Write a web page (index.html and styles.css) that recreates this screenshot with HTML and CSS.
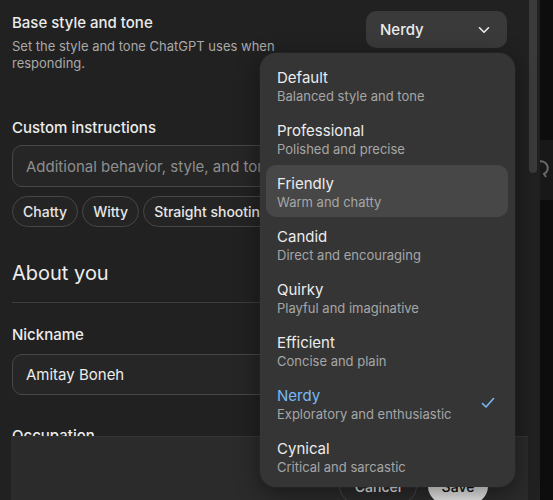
FILE: index.html
```html
<!DOCTYPE html>
<html>
<head>
<meta charset="utf-8">
<link rel="stylesheet" href="styles.css">
</head>
<body>
<div class="app">
  <div class="main">
    <div class="scroll">
      <div class="row-top">
        <div class="info">
          <div class="title base-title">Base style and tone</div>
          <div class="desc">Set the style and tone ChatGPT uses when responding.</div>
        </div>
        <button class="select">
          <span>Nerdy</span>
          <svg class="chev" width="12" height="8" viewBox="0 0 12 8"><path d="M1.5 1.8 L6 6.2 L10.5 1.8" fill="none" stroke="#ececec" stroke-width="1.6" stroke-linecap="round" stroke-linejoin="round"/></svg>
        </button>
      </div>

      <div class="title ci-title">Custom instructions</div>
      <div class="field placeholder">Additional behavior, style, and tone preferences</div>
      <div class="chips">
        <span class="chip">Chatty</span>
        <span class="chip">Witty</span>
        <span class="chip">Straight shooting</span>
        <span class="chip">Encouraging</span>
      </div>

      <div class="heading">About you</div>
      <div class="divider"></div>

      <div class="title nick-title">Nickname</div>
      <div class="field value">Amitay Boneh</div>

      <div class="title occ-title">Occupation</div>
    </div>

    <div class="footer">
      <button class="btn btn-cancel">Cancel</button>
      <button class="btn btn-save">Save</button>
    </div>

    <div class="scrollbar"></div>

    <div class="menu">
      <div class="item"><div class="it">Default</div><div class="is">Balanced style and tone</div></div>
      <div class="item"><div class="it">Professional</div><div class="is">Polished and precise</div></div>
      <div class="item hl"><div class="it">Friendly</div><div class="is">Warm and chatty</div></div>
      <div class="item"><div class="it">Candid</div><div class="is">Direct and encouraging</div></div>
      <div class="item"><div class="it">Quirky</div><div class="is">Playful and imaginative</div></div>
      <div class="item"><div class="it">Efficient</div><div class="is">Concise and plain</div></div>
      <div class="item sel"><div class="it">Nerdy</div><div class="is">Exploratory and enthusiastic</div>
        <svg class="check" width="14" height="12" viewBox="0 0 14 12"><path d="M1.5 6.5 L5 10 L12.5 1.5" fill="none" stroke="#7ab8f5" stroke-width="1.6" stroke-linecap="round" stroke-linejoin="round"/></svg>
      </div>
      <div class="item"><div class="it">Cynical</div><div class="is">Critical and sarcastic</div></div>
    </div>
  </div>
  <div class="side">
    <div class="side-tab">
      <svg width="13" height="24" viewBox="0 0 13 24"><path d="M-2 6 A6 6 0 1 1 4 18 L6 21" fill="none" stroke="#6a6a6a" stroke-width="2"/></svg>
    </div>
  </div>
</div>
</body>
</html>
```
FILE: styles.css
```css
* { box-sizing: border-box; }
html, body { margin: 0; padding: 0; }
body {
  background: #212121;
  font-family: Inter, "Noto Sans", "Liberation Sans", sans-serif;
  color: #ececec;
  overflow: hidden;
  width: 553px;
  height: 500px;
}
.app { display: flex; height: 500px; }
.main {
  position: relative;
  width: 540px;
  height: 500px;
  overflow: hidden;
  background: #212121;
}
.side {
  flex: 1;
  background: #0d0d0d;
  padding-top: 140px;
}
.side-tab {
  height: 60px;
  background: #181818;
  padding-top: 16px;
  overflow: hidden;
}
.side-tab svg { display: block; }
.scroll { padding: 11px 33px 0 12px; }

.row-top {
  display: flex;
  justify-content: space-between;
  align-items: flex-start;
}
.info { width: 300px; }
.title {
  font-size: 15px;
  line-height: 20px;
  font-weight: 500;
  color: #ececec;
}
.base-title { margin-top: 2px; }
.desc {
  margin-top: 5px;
  font-size: 13px;
  line-height: 17px;
  color: #a9a9a9;
  max-width: 285px;
}
.select {
  width: 141px;
  height: 37px;
  border: none;
  border-radius: 10px;
  background: #3a3a3a;
  color: #ececec;
  font-family: inherit;
  font-size: 15px;
  font-weight: 500;
  display: flex;
  align-items: center;
  justify-content: space-between;
  padding: 0 17px 0 14px;
}
.chev { display: block; }

.ci-title { margin-top: 46px; }
.field {
  margin-top: 7px;
  height: 42px;
  border: 1px solid #474747;
  border-radius: 10px;
  background: #262626;
  padding: 0 13px;
  display: flex;
  align-items: center;
  font-size: 15px;
  white-space: nowrap;
  overflow: hidden;
}
.placeholder { color: #8e8e8e; }
.value { color: #ececec; height: 41px; margin-top: 9px; }
.chips { display: flex; gap: 4px; margin-top: 9px; white-space: nowrap; }
.chip {
  height: 31px;
  border: 1px solid #474747;
  border-radius: 999px;
  padding: 0 10px;
  display: flex;
  align-items: center;
  font-size: 14px;
  font-weight: 500;
  color: #e6e6e6;
  background: #242424;
}
.heading {
  margin-top: 32px;
  font-size: 20px;
  line-height: 28px;
  font-weight: 400;
  color: #ececec;
}
.divider { margin-top: 15px; height: 1px; background: #3d3d3d; }
.nick-title { margin-top: 22px; }
.occ-title { margin-top: 31px; }

.footer {
  position: absolute;
  left: 11px;
  right: 12px;
  top: 436px;
  bottom: 0;
  background: #2b2b2b;
  border-top: 1px solid #353535;
  display: flex;
  justify-content: flex-end;
  align-items: flex-start;
  gap: 11px;
  padding: 31px 40px 0 0;
}
.btn {
  height: 36px;
  border-radius: 999px;
  font-family: inherit;
  font-size: 14px;
  font-weight: 500;
  padding: 0;
}
.btn-cancel {
  width: 78px;
  background: transparent;
  border: 1px solid #4a4a4a;
  color: #ececec;
}
.btn-save {
  width: 60px;
  background: #e8e8e8;
  border: none;
  color: #0d0d0d;
}
.scrollbar {
  position: absolute;
  left: 529px;
  top: 0;
  width: 8px;
  height: 173px;
  border-radius: 0 0 4px 4px;
  background: #3b3b3b;
}

.menu {
  position: absolute;
  left: 260px;
  top: 53px;
  width: 255px;
  height: 434px;
  border-radius: 16px;
  background: #353535;
  box-shadow: 0 6px 24px rgba(0, 0, 0, 0.45), 0 0 0 1px rgba(255, 255, 255, 0.03);
  padding: 6px 7px 5px 6px;
  display: flex;
  flex-direction: column;
  gap: 1px;
}
.item {
  position: relative;
  height: 52px;
  padding: 10px 11px 0;
  border-radius: 10px;
}
.item.hl { background: #474747; }
.it {
  font-size: 15px;
  line-height: 18px;
  color: #ececec;
}
.is {
  margin-top: 1px;
  font-size: 13px;
  line-height: 17px;
  color: #a6a6a6;
  white-space: nowrap;
}
.sel .it { color: #7ab8f5; }
.check {
  position: absolute;
  right: 13px;
  top: 20px;
}
```
